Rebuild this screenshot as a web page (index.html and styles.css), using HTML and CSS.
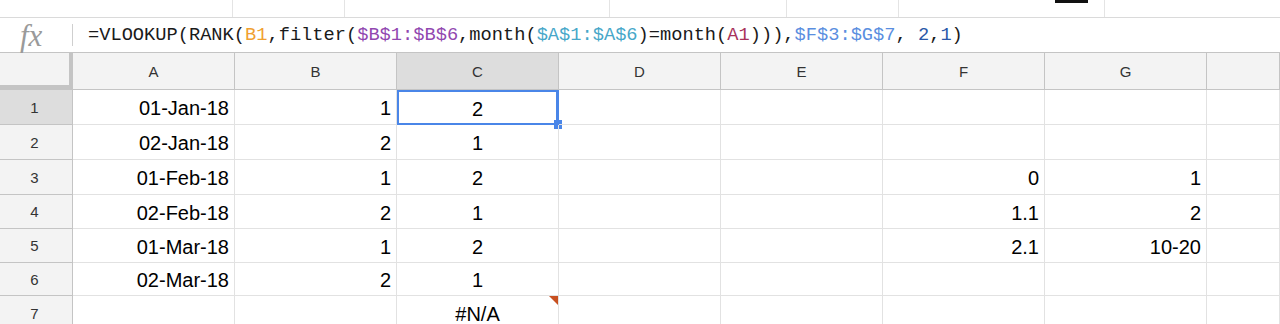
FILE: index.html
```html
<!DOCTYPE html>
<html lang="en">
<head>
    <meta charset="UTF-8">
    <title>Sheet</title>
    <link rel="stylesheet" href="styles.css">
</head>
<body>

    <!-- resti della toolbar sopra -->
    <div class="top-strip">
        <div class="strip-cell" style="width: 233px"></div>
        <div class="strip-cell" style="width: 112px"></div>
        <div class="strip-cell" style="width: 265px"></div>
        <div class="strip-cell" style="width: 177px"></div>
        <div class="strip-cell" style="width: 112px"></div>
        <div class="strip-cell strip-mark" style="width: 206px"></div>
    </div>

    <!-- barra formula -->
    <div class="formula-bar">
        <span class="fx">fx</span>
        <span class="formula-sep"></span>
        <span class="formula">=VLOOKUP(RANK(<span class="ref-b1">B1</span>,filter(<span class="ref-b">$B$1:$B$6</span>,month(<span class="ref-a">$A$1:$A$6</span>)=month(<span class="ref-a1">A1</span>))),<span class="ref-fg">$F$3:$G$7</span>, <span class="num">2</span>,<span class="num">1</span>)</span>
    </div>

    <div class="sheet">
        <div class="corner"></div>
        <div class="col-head">A</div>
        <div class="col-head">B</div>
        <div class="col-head active">C</div>
        <div class="col-head">D</div>
        <div class="col-head">E</div>
        <div class="col-head">F</div>
        <div class="col-head">G</div>
        <div class="col-head"></div>

        <div class="row-head active">1</div>
        <div class="cell">01-Jan-18</div>
        <div class="cell">1</div>
        <div class="cell center selected">2<span class="handle"></span></div>
        <div class="cell"></div><div class="cell"></div><div class="cell"></div><div class="cell"></div><div class="cell"></div>

        <div class="row-head">2</div>
        <div class="cell">02-Jan-18</div>
        <div class="cell">2</div>
        <div class="cell center">1</div>
        <div class="cell"></div><div class="cell"></div><div class="cell"></div><div class="cell"></div><div class="cell"></div>

        <div class="row-head">3</div>
        <div class="cell">01-Feb-18</div>
        <div class="cell">1</div>
        <div class="cell center">2</div>
        <div class="cell"></div><div class="cell"></div>
        <div class="cell">0</div>
        <div class="cell">1</div>
        <div class="cell"></div>

        <div class="row-head">4</div>
        <div class="cell">02-Feb-18</div>
        <div class="cell">2</div>
        <div class="cell center">1</div>
        <div class="cell"></div><div class="cell"></div>
        <div class="cell">1.1</div>
        <div class="cell">2</div>
        <div class="cell"></div>

        <div class="row-head">5</div>
        <div class="cell">01-Mar-18</div>
        <div class="cell">1</div>
        <div class="cell center">2</div>
        <div class="cell"></div><div class="cell"></div>
        <div class="cell">2.1</div>
        <div class="cell">10-20</div>
        <div class="cell"></div>

        <div class="row-head">6</div>
        <div class="cell">02-Mar-18</div>
        <div class="cell">2</div>
        <div class="cell center">1</div>
        <div class="cell"></div><div class="cell"></div><div class="cell"></div><div class="cell"></div><div class="cell"></div>

        <div class="row-head">7</div>
        <div class="cell"></div>
        <div class="cell"></div>
        <div class="cell center error">#N/A</div>
        <div class="cell"></div><div class="cell"></div><div class="cell"></div><div class="cell"></div><div class="cell"></div>
    </div>

</body>
</html>
```

FILE: styles.css
```css
body {
    margin: 0;
    padding: 0;
    font-family: 'Liberation Sans', Arial, sans-serif;
    background-color: #fff;
    color: #000;
    overflow: hidden;
}

/* striscia in alto */
.top-strip {
    display: flex;
    height: 17px;
    border-bottom: 1px solid #dadada;
}

.strip-cell {
    border-right: 1px solid #e4e4e4;
    box-sizing: border-box;
    position: relative;
}

.strip-mark::after {
    content: '';
    position: absolute;
    top: 0;
    right: 16px;
    width: 33px;
    height: 3px;
    background-color: #111;
}

/* barra formula */
.formula-bar {
    display: flex;
    align-items: center;
    height: 34px;
    border-bottom: 1px solid #c4c4c4;
}

.fx {
    width: 52px;
    padding-left: 20px;
    box-sizing: border-box;
    font-family: 'Liberation Serif', serif;
    font-style: italic;
    font-size: 31px;
    line-height: 1;
    color: #9a9a9a;
}

.formula-sep {
    width: 1px;
    height: 22px;
    margin-left: 20px;
    background-color: #cfcfcf;
}

.formula {
    margin-left: 15px;
    font-family: 'Liberation Mono', monospace;
    font-size: 18.7px;
    color: #1a1a1a;
    white-space: pre;
}

.ref-b1 { color: #f0a030; }
.ref-b { color: #9147b0; }
.ref-a { color: #47a7c9; }
.ref-a1 { color: #a8325a; }
.ref-fg { color: #5a8ee0; }
.num { color: #2a58a8; }

/* griglia */
.sheet {
    display: grid;
    grid-template-columns: 73px repeat(7, 162px) 1fr;
    grid-template-rows: 37px 35px 35px 35px 34px 34px 33px 35px;
}

.corner {
    background-color: #f3f3f3;
    border-right: 4px solid #c4c4c4;
    border-bottom: 5px solid #c4c4c4;
    box-sizing: border-box;
}

.col-head {
    display: flex;
    align-items: center;
    justify-content: center;
    background-color: #f3f3f3;
    border-right: 1px solid #c4c4c4;
    border-bottom: 1px solid #c4c4c4;
    box-sizing: border-box;
    font-size: 15px;
    color: #333;
    padding-top: 1px;
}

.col-head.active,
.row-head.active {
    background-color: #dddddd;
}

.row-head {
    display: flex;
    align-items: center;
    justify-content: center;
    background-color: #f3f3f3;
    border-right: 1px solid #c4c4c4;
    border-bottom: 1px solid #c4c4c4;
    box-sizing: border-box;
    font-size: 15px;
    color: #333;
    padding-right: 3px;
}

.cell {
    display: flex;
    align-items: center;
    justify-content: flex-end;
    padding: 3px 5px 0 5px;
    border-right: 1px solid #e2e2e2;
    border-bottom: 1px solid #e2e2e2;
    box-sizing: border-box;
    font-size: 20px;
    position: relative;
}

.cell.center {
    justify-content: center;
}

.cell.selected {
    border: 2px solid #4a86e8;
    border-right-width: 3px;
}

.handle {
    position: absolute;
    right: -6px;
    bottom: -6px;
    width: 8px;
    height: 9px;
    background-color: #4a86e8;
}

/* triangolo di errore */
.cell.error::after {
    content: '';
    position: absolute;
    top: 0;
    right: 0;
    border-top: 9px solid #c85020;
    border-left: 9px solid transparent;
}
```
